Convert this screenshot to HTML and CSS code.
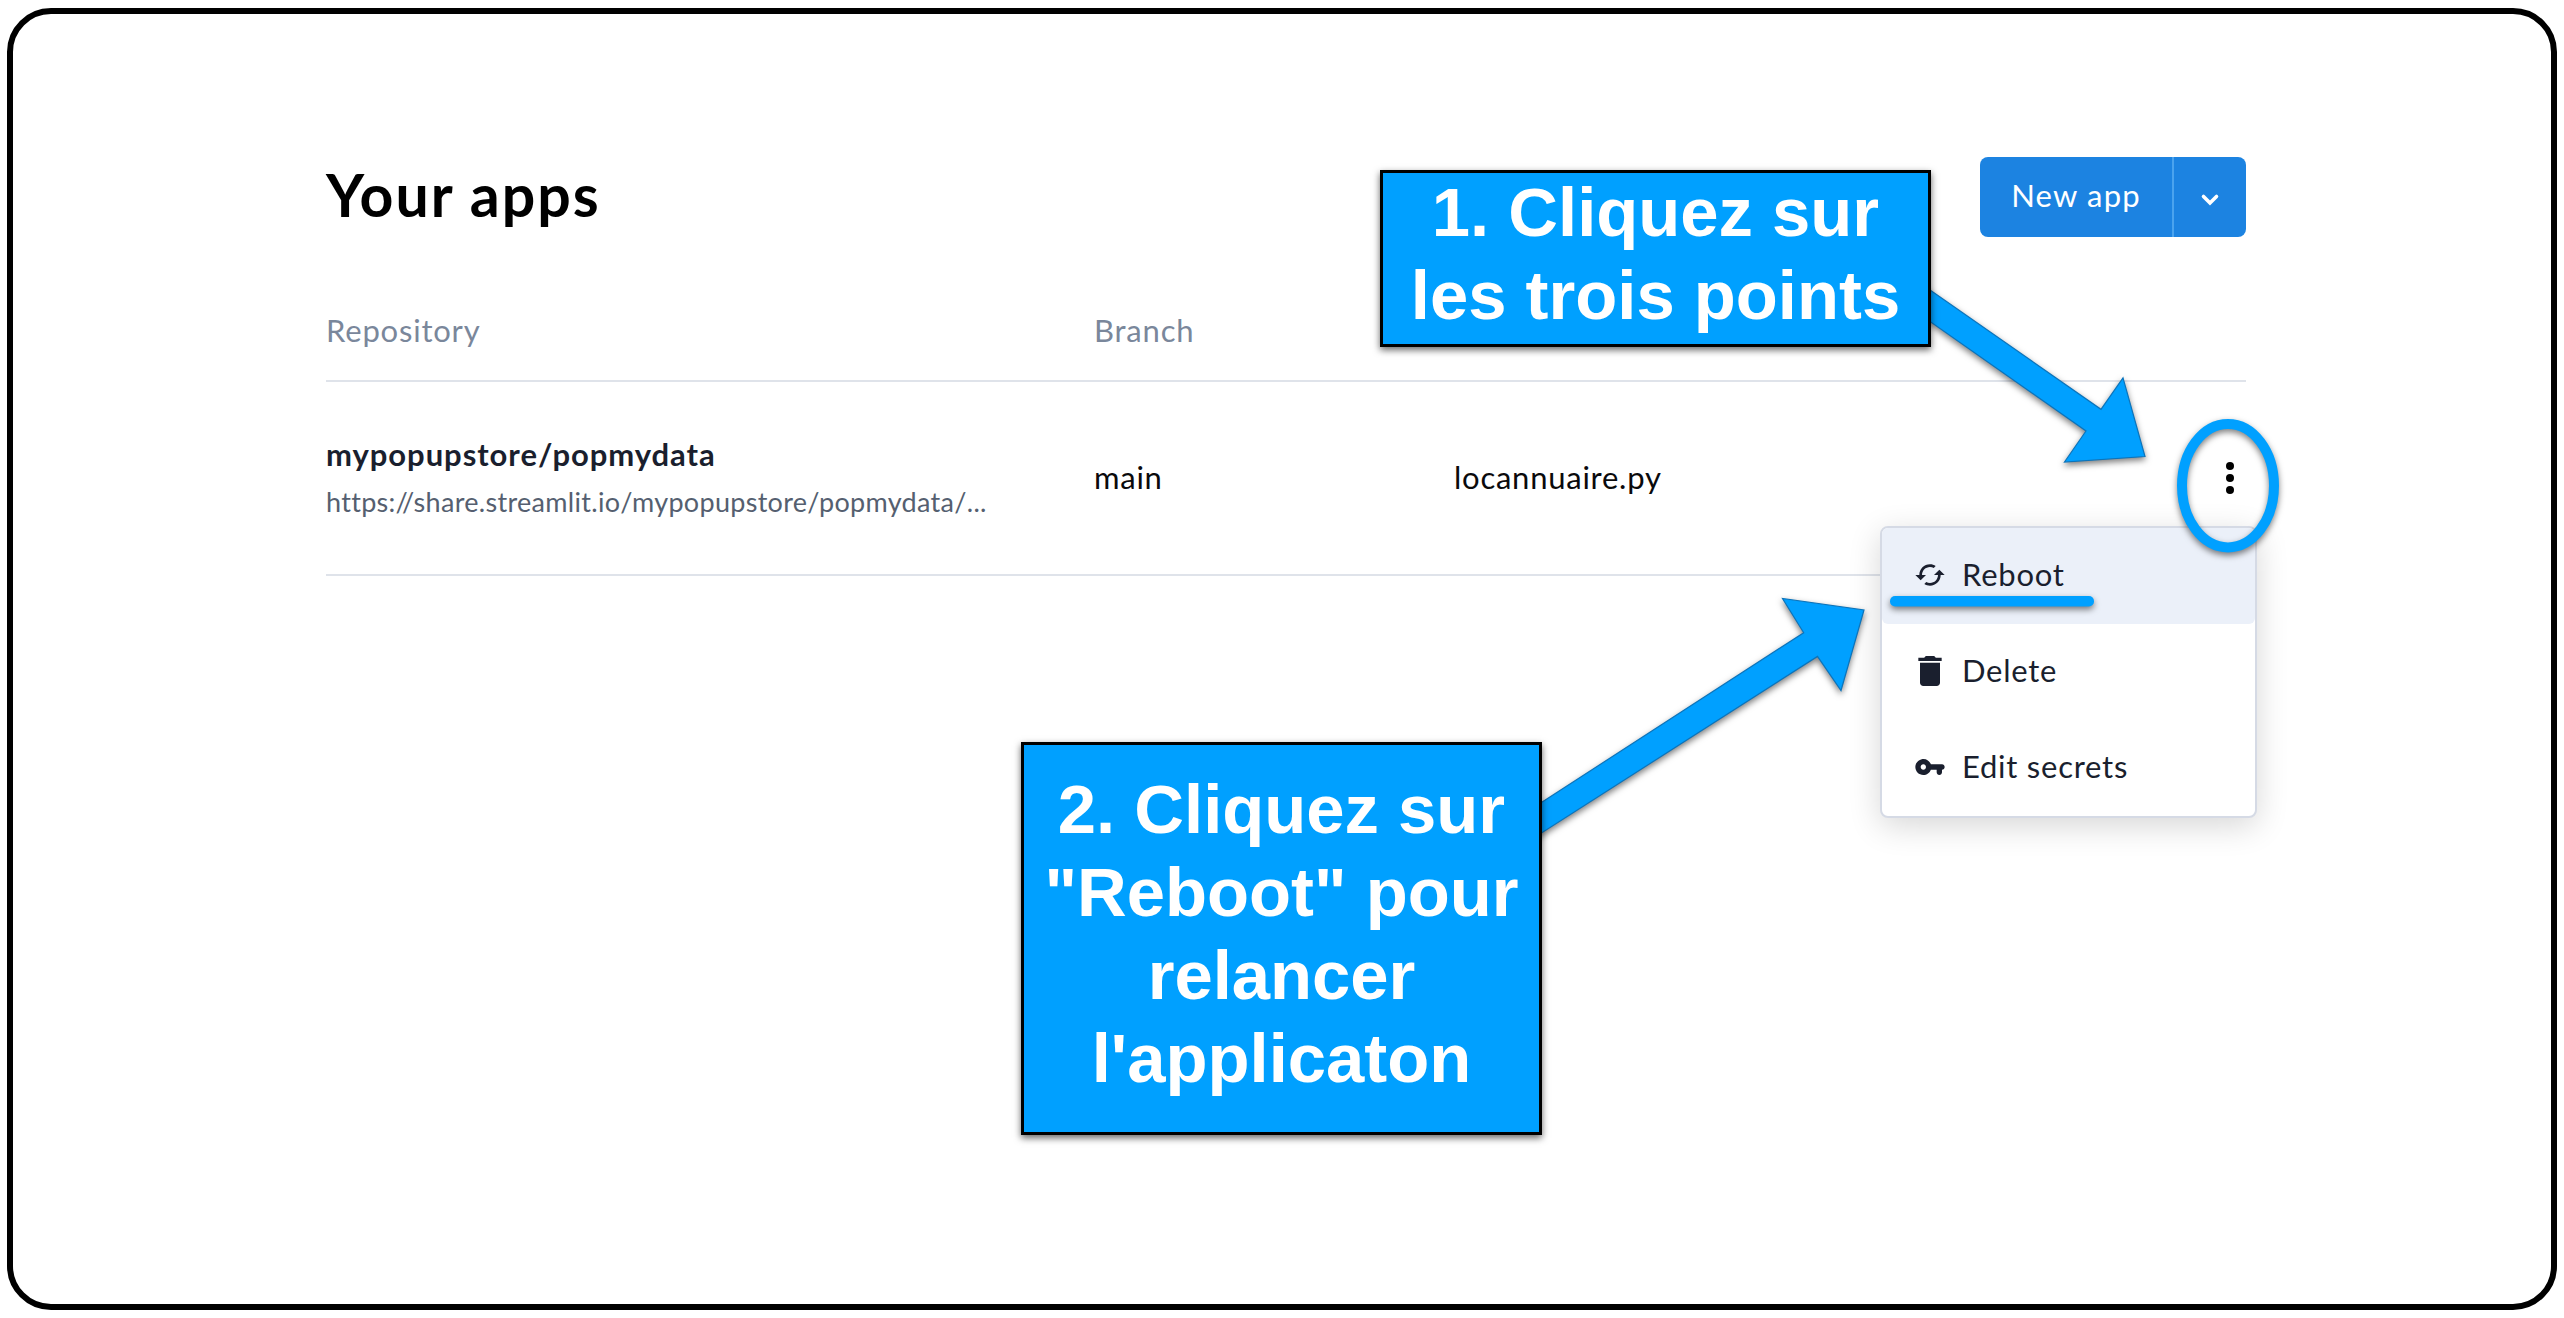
FILE: index.html
```html
<!DOCTYPE html>
<html lang="fr">
<head>
<meta charset="utf-8">
<title>Your apps</title>
<link rel="stylesheet" href="styles.css">
</head>
<body>
<main class="frame">
  <header class="page-header">
    <h1 class="title">Your apps</h1>
    <div class="split-button">
      <button class="new-app"><span class="t-new">New app</span></button>
      <button class="new-more" aria-label="More"><svg width="20" height="14" viewBox="0 0 20 14"><path d="M3.500 3.500 10 10l6.500-6.500" fill="none" stroke="#fff" stroke-width="3.600" stroke-linecap="round"/></svg></button>
    </div>
  </header>
  <div class="row head">
    <span class="t-repo">Repository</span><span class="t-branch">Branch</span>
  </div>
  <div class="row app">
    <div class="repo">
      <strong class="t-name">mypopupstore/popmydata</strong>
      <span class="url">https://share.streamlit.io/mypopupstore/popmydata/...</span>
    </div>
    <span class="t-main">main</span>
    <span class="t-file">locannuaire.py</span>
    <div class="dots"><i></i><i></i><i></i></div>
  </div>
</main>

<ul class="menu">
  <li class="item active"><svg width="32" height="32" viewBox="0 0 24 24"><path d="M19 8l-4 4h3c0 3.310-2.690 6-6 6-1.010 0-1.970-.25-2.800-.7l-1.460 1.460C8.970 19.540 10.430 20 12 20c4.420 0 8-3.580 8-8h3l-4-4zM6 12c0-3.310 2.690-6 6-6 1.010 0 1.970.25 2.800.7l1.460-1.460C15.030 4.460 13.570 4 12 4c-4.420 0-8 3.580-8 8H1l4 4 4-4H6z"/></svg><span class="t-reboot">Reboot</span></li>
  <li class="item"><svg width="40" height="40" viewBox="0 0 24 24"><path d="M6 19c0 1.100.9 2 2 2h8c1.100 0 2-.9 2-2V7H6v12zM19 4h-3.500l-1-1h-5l-1 1H5v2h14V4z"/></svg><span class="t-delete">Delete</span></li>
  <li class="item"><svg width="32" height="32" viewBox="0 0 24 24"><path d="M12.650 10C11.700 7.310 8.900 5.500 5.770 6.120c-2.290.46-4.150 2.290-4.630 4.580C.32 14.570 3.260 18 7 18c2.610 0 4.830-1.670 5.650-4H17v2c0 1.100.9 2 2 2s2-.9 2-2v-2c1.100 0 2-.9 2-2s-.9-2-2-2h-8.350zM7 14c-1.100 0-2-.9-2-2s.9-2 2-2 2 .9 2 2-.9 2-2 2z"/></svg><span class="t-secrets">Edit secrets</span></li>
</ul>

<svg class="marks" width="2564" height="1318" viewBox="0 0 2564 1318">
  <g class="shade" fill="#00a0ff">
    <path class="arrow" d="M1925 286.500 2101 409.300 2123 377.800 2145 456.500 2064.500 462 2086 431 1925 318Z"/>
    <path class="arrow" d="M1536 806 1803.700 632.700 1782.500 598.500 1864 609.900 1841 690.500 1817.500 656.400 1536 836.500Z"/>
    <ellipse cx="2228" cy="485.700" rx="46" ry="61.700" fill="none" stroke="#00a0ff" stroke-width="10"/>
    <rect x="1890" y="596" width="204" height="10.500" rx="5"/>
  </g>
</svg>
<div class="note note-one"><span>1. Cliquez sur</span><span>les trois points</span></div>
<div class="note note-two"><span>2. Cliquez sur</span><span>"Reboot" pour</span><span>relancer</span><span>l'applicaton</span></div>
</body>
</html>
```
FILE: styles.css
```css
* { box-sizing: border-box; }
body {
  margin: 0;
  padding: 8px 7px;
  width: 2564px;
  height: 1318px;
  overflow: hidden;
  background: #fff;
  font: 31px/40px Lato, "Open Sans", sans-serif;
  color: #0a0a0c;
}
.frame {
  width: 2550px;
  height: 1302px;
  border: 6px solid #000;
  border-radius: 44px;
  padding: 143px 305px 0 313px;
}
.page-header {
  display: flex;
  justify-content: space-between;
  align-items: center;
  height: 80px;
}
.title { margin: 0; padding-bottom: 4px; font-size: 59px; line-height: 70px; font-weight: 700; letter-spacing: 2px; color: #000; }
.split-button {
  display: flex;
  width: 266px;
  height: 80px;
  border-radius: 8px;
  background: #1c83e1;
  overflow: hidden;
}
.split-button button {
  border: 0;
  padding: 0;
  background: none;
  color: #fff;
  font: inherit;
  display: flex;
  align-items: center;
  justify-content: center;
}
.split-button .new-app { width: 192px; padding-bottom: 4px; letter-spacing: 1.2px; }
.split-button .new-more { flex: 1; border-left: 2px solid #4aa3ee; padding-top: 5px; }
.row {
  display: grid;
  grid-template-columns: 768px 360px 1fr 32px;
  align-items: center;
  border-bottom: 2px solid #dfe3ea;
}
.head { height: 145px; padding-top: 43px; color: #7a879b; letter-spacing: .8px; }
.app { height: 194px; }
.repo { display: flex; flex-direction: column; gap: 8px; }
.t-name { color: #1a1f2e; letter-spacing: .95px; }
.url { font-size: 27px; color: #555f70; letter-spacing: .3px; }
.t-main, .t-file { padding-bottom: 3px; letter-spacing: .75px; }
.dots { display: flex; flex-direction: column; align-items: center; gap: 4px; }
.dots i { width: 8px; height: 8px; border-radius: 50%; background: #000; }
.menu {
  position: absolute;
  left: 1880px;
  top: 526px;
  width: 377px;
  margin: 0;
  padding: 0;
  list-style: none;
  background: #fff;
  border: 2px solid #d5dae5;
  border-radius: 8px;
  box-shadow: 0 8px 32px rgba(0, 0, 0, .16);
  color: #1a1f2e;
}
.item { display: flex; align-items: center; height: 96px; padding: 0 0 2px 28px; letter-spacing: .75px; }
.item svg { flex: none; width: 40px; fill: #1a1f2e; margin-right: 12px; }
.item span { padding-bottom: 2px; }
.active { background: #ebf0f9; border-radius: 6px; }
.marks { position: absolute; left: 0; top: 0; }
.shade { filter: drop-shadow(0 3px 3px rgba(0, 0, 0, .5)); }
.arrow { stroke: #0b74bb; stroke-width: 1.2px; }
.note {
  position: absolute;
  display: flex;
  flex-direction: column;
  justify-content: center;
  text-align: center;
  background: #00a0ff;
  border: 3px solid #000;
  box-shadow: 0 3px 7px rgba(0, 0, 0, .6);
  color: #fff;
  font: 700 68.8px/83px "Liberation Sans", Arial, sans-serif;
  white-space: nowrap;
}
.note-one { left: 1380px; top: 170px; width: 551px; height: 177px; padding-bottom: 10px; }
.note-two { left: 1021px; top: 742px; width: 521px; height: 393px; padding-bottom: 10px; }
```
